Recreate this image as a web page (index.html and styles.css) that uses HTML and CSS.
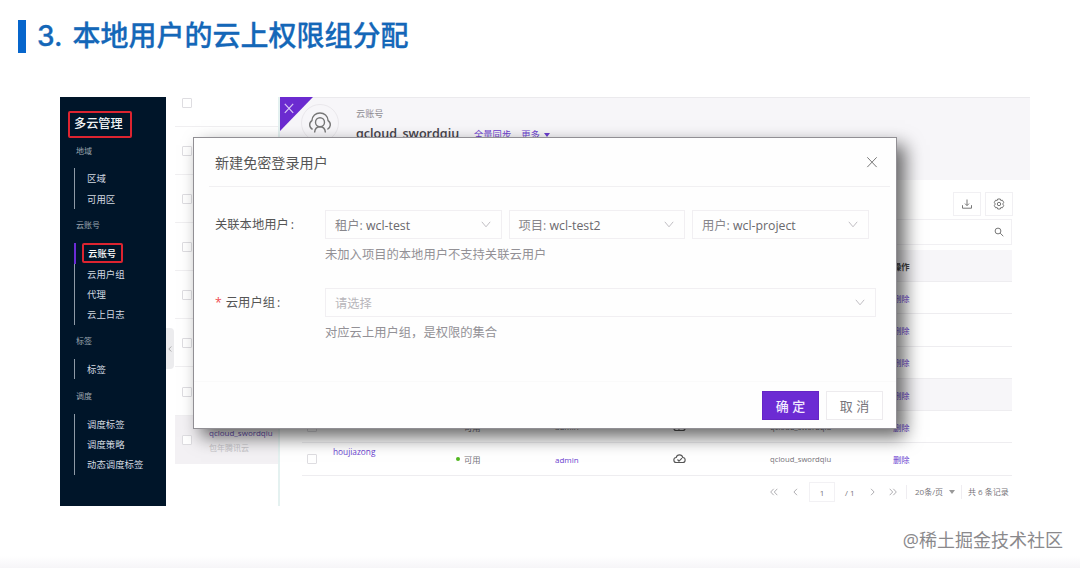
FILE: index.html
```html
<!DOCTYPE html>
<html lang="zh-CN">

<head>
    <meta charset="UTF-8">
    <title>本地用户的云上权限组分配</title>
    <link rel="stylesheet" href="styles.css">
</head>

<body>

    <h1 class="page-title">3. <span>本地用户的云上权限组分配</span></h1>

    <div class="console">
        <nav class="sidebar">
            <div class="sidebar-title">多云管理</div>
            <h4>地域</h4>
            <ul>
                <li>区域</li>
                <li>可用区</li>
            </ul>
            <h4>云账号</h4>
            <ul>
                <li class="active"><span>云账号</span></li>
                <li>云用户组</li>
                <li>代理</li>
                <li>云上日志</li>
            </ul>
            <h4>标签</h4>
            <ul>
                <li>标签</li>
            </ul>
            <h4>调度</h4>
            <ul>
                <li>调度标签</li>
                <li>调度策略</li>
                <li>动态调度标签</li>
            </ul>
        </nav>

        <!-- Account list -->
        <div class="accounts">
            <div class="account first"><i class="checkbox"></i></div>
            <div class="account"><i class="checkbox"></i></div>
            <div class="account"><i class="checkbox"></i></div>
            <div class="account"><i class="checkbox"></i></div>
            <div class="account"><i class="checkbox"></i></div>
            <div class="account"><i class="checkbox"></i></div>
            <div class="account"><i class="checkbox"></i></div>
            <div class="account selected">
                <i class="checkbox"></i>
                <div class="account-text">
                    <p class="account-name">qcloud_swordqiu</p>
                    <p class="account-brand">包年腾讯云</p>
                </div>
            </div>
            <div class="collapse">
                <svg width="4" height="6" viewBox="0 0 4 6"><path d="M3.3.5.8 3l2.5 2.5"/></svg>
            </div>
        </div>

        <!-- Account detail -->
        <div class="detail">
            <div class="detail-header">
                <svg class="corner" width="33" height="34" viewBox="0 0 33 34">
                    <path class="corner-bg" d="M0 0h33L0 34z"/>
                    <path class="corner-x" d="M4.8 6.8l8.4 9M13.2 6.8l-8.4 9"/>
                </svg>
                <div class="avatar">
                    <svg width="26" height="24" viewBox="0 0 26 24">
                        <path d="M5.600 18.300a5 5 0 0 1-.7-8.700C5.200 5 8.700 2 13 2s7.800 3 8.100 7.600a5 5 0 0 1-.7 8.700"/>
                        <circle cx="13" cy="11.300" r="4.500"/>
                        <path d="M7.600 21.500c.3-3.400 2.300-5.700 5.400-5.700s5.100 2.300 5.400 5.700"/>
                    </svg>
                </div>
                <div class="detail-info">
                    <p class="detail-type">云账号</p>
                    <div class="detail-line">
                        <h2>qcloud_swordqiu</h2>
                        <a>全量同步</a>
                        <a>更多 <i class="caret"></i></a>
                    </div>
                </div>
            </div>

            <div class="detail-body">
                <div class="toolbar">
                    <div class="tool">
                        <svg width="12" height="12" viewBox="0 0 12 12"><path d="M6 1.500v6M4 5.600l2 2 2-2M1.500 7.200v3h9v-3"/></svg>
                    </div>
                    <div class="tool">
                        <svg width="12" height="12" viewBox="0 0 12 12"><path d="M4.700 1h2.600l.5 1.500 1.600-.3 1.300 2.200L9.700 6l1 1.600-1.300 2.200-1.600-.3L7.300 11H4.700l-.5-1.500-1.600.3-1.300-2.200 1-1.600-1-1.600 1.300-2.200 1.600.3z"/><circle cx="6" cy="6" r="1.700"/></svg>
                    </div>
                </div>
                <div class="search">
                    <svg width="10" height="10" viewBox="0 0 10 10"><circle cx="4" cy="4" r="2.900"/><path d="M6.200 6.200l3.100 3"/></svg>
                </div>
                <div class="table">
                    <div class="tr th"><b class="ops">操作</b></div>
                    <div class="tr"><a class="ops">删除</a></div>
                    <div class="tr"><a class="ops">删除</a></div>
                    <div class="tr"><a class="ops">删除</a></div>
                    <div class="tr hover"><a class="ops">删除</a></div>
                    <div class="tr">
                        <i class="checkbox"></i>
                        <a class="name"></a>
                        <span class="status">可用</span>
                        <span class="owner">admin</span>
                        <svg class="cloud" width="13" height="10" viewBox="0 0 13 10"><path d="M3.500 8.500a2.500 2.500 0 0 1-.3-5 3.400 3.400 0 0 1 6.600 0 2.500 2.500 0 0 1-.3 5zM4.500 5.500l1.500 1.600 3-3"/></svg>
                        <span class="account-col">qcloud_swordqiu</span>
                        <a class="ops">删除</a>
                    </div>
                    <div class="tr">
                        <i class="checkbox"></i>
                        <a class="name">houjiazong</a>
                        <span class="status"><i class="dot"></i>可用</span>
                        <a class="owner">admin</a>
                        <svg class="cloud" width="13" height="10" viewBox="0 0 13 10"><path d="M3.500 8.500a2.500 2.500 0 0 1-.3-5 3.400 3.400 0 0 1 6.600 0 2.500 2.500 0 0 1-.3 5zM4.500 5.500l1.500 1.600 3-3"/></svg>
                        <span class="account-col">qcloud_swordqiu</span>
                        <a class="ops">删除</a>
                    </div>
                </div>
                <div class="pager">
                    <svg class="first-page" width="8" height="8" viewBox="0 0 8 8"><path d="M3.700.8.700 4l3 3.200M7.300.8l-3 3.200 3 3.200"/></svg>
                    <svg class="prev" width="5" height="8" viewBox="0 0 5 8"><path d="M4 .8.900 4 4 7.200"/></svg>
                    <span class="page">1</span>
                    <span class="total">/ 1</span>
                    <svg class="next" width="5" height="8" viewBox="0 0 5 8"><path d="M1 .8 4.100 4 1 7.200"/></svg>
                    <svg class="last-page" width="8" height="8" viewBox="0 0 8 8"><path d="M.7.800l3 3.200-3 3.200M4.300.8l3 3.200-3 3.200"/></svg>
                    <span class="size">20条/页 <i class="caret"></i></span>
                    <span class="count">共 6 条记录</span>
                </div>
            </div>
        </div>

        <div class="modal">
            <div class="modal-header">
                <h3>新建免密登录用户</h3>
                <svg width="12" height="12" viewBox="0 0 12 12"><path d="M1.300 1.300l9.400 9.800M10.700 1.300l-9.400 9.800"/></svg>
            </div>
            <div class="modal-body">
                <div class="form-row">
                    <label>关联本地用户<i class="colon">:</i></label>
                    <div class="field">
                        <div class="selects">
                            <div class="select"><span>租户: <em>wcl-test</em></span><svg width="10" height="7" viewBox="0 0 10 7"><path d="M.8.800 5 5.800 9.200.8"/></svg></div>
                            <div class="select"><span>项目: <em>wcl-test2</em></span><svg width="10" height="7" viewBox="0 0 10 7"><path d="M.8.800 5 5.800 9.200.8"/></svg></div>
                            <div class="select"><span>用户: <em>wcl-project</em></span><svg width="10" height="7" viewBox="0 0 10 7"><path d="M.8.800 5 5.800 9.200.8"/></svg></div>
                        </div>
                        <p class="hint">未加入项目的本地用户不支持关联云用户</p>
                    </div>
                </div>
                <div class="form-row">
                    <label><i class="required">*</i>云用户组<i class="colon">:</i></label>
                    <div class="field">
                        <div class="select wide"><span class="placeholder">请选择</span><svg width="10" height="7" viewBox="0 0 10 7"><path d="M.8.800 5 5.800 9.200.8"/></svg></div>
                        <p class="hint">对应云上用户组，是权限的集合</p>
                    </div>
                </div>
            </div>
            <div class="modal-footer">
                <button class="btn primary">确 定</button>
                <button class="btn">取 消</button>
            </div>
        </div>
    </div>

    <div class="watermark">@稀土掘金技术社区</div>

</body>

</html>
```
FILE: styles.css
```css
* {
    box-sizing: border-box;
}

body {
    margin: 0;
    height: 568px;
    overflow: hidden;
    font-family: "Open Sans", "Noto Sans CJK SC", sans-serif;
    background: linear-gradient(#fff 556px, #f6f5f8 568px);
    position: relative;
}

h1, h2, h3, h4, p, ul {
    margin: 0;
    padding: 0;
    font-weight: normal;
}

i, em {
    font-style: normal;
}

svg {
    display: block;
    flex: none;
    fill: none;
    stroke: #777;
}

.page-title {
    display: flex;
    gap: 10px;
    margin: 20px 0 44px 18px;
    padding-left: 11px;
    border-left: 8px solid #0766cc;
    height: 33px;
    line-height: 33px;
    font-family: Inter, "Noto Sans CJK SC", sans-serif;
    font-size: 28px;
    font-weight: 500;
    color: #1467b8;
    -webkit-text-stroke: 0.3px #1467b8;
    white-space: nowrap;
}

.console {
    position: relative;
    display: flex;
    margin-left: 60px;
    width: 970px;
    height: 409px;
}

/* Sidebar */
.sidebar {
    width: 106px;
    padding: 14px 0 0 8px;
    background: #001529;
    color: #d3dae1;
}

.sidebar-title {
    width: 64px;
    height: 27px;
    margin-bottom: 2.500px;
    padding-left: 4px;
    border: 2px solid #dc2430;
    border-radius: 2px;
    line-height: 22px;
    font-size: 12.200px;
    font-weight: 500;
    color: #f0f3f5;
}

.sidebar h4 {
    height: 20px;
    margin: 0 0 7.800px 8px;
    line-height: 20px;
    font-size: 8px;
    color: #9ba5af;
}

.sidebar ul {
    margin: 0 0 6.400px 6px;
    border-left: 1px solid #8e9aa6;
    list-style: none;
}

.sidebar li {
    height: 20.400px;
    padding-left: 12px;
    line-height: 21.600px;
    font-size: 9.400px;
}

.sidebar li.active {
    margin-left: -1px;
    padding-left: 6px;
    border-left: 2px solid #6b2bd6;
    color: #fff;
    font-weight: 500;
}

.active span {
    display: block;
    width: 41px;
    height: 20px;
    padding-left: 4px;
    border: 2px solid #dc2430;
    border-radius: 2px;
    line-height: 17px;
}

/* Account list */
.accounts {
    position: relative;
    width: 114px;
    padding-left: 9px;
    border-right: 2px solid #e4f1f0;
    overflow: hidden;
}

.account {
    display: flex;
    align-items: center;
    height: 48.200px;
    padding: 1px 0 0 7px;
    border-bottom: 1px solid #f0eff1;
}

.account.first {
    height: 29.500px;
    padding-bottom: 17px;
}

.account.selected {
    background: #f3f1f4;
    border: none;
}

.checkbox {
    flex: none;
    width: 10px;
    height: 10px;
    border: 1px solid #dedde1;
    border-radius: 1px;
    background: #fff;
}

.account-text {
    margin-left: 17px;
    font-size: 8px;
    line-height: 15px;
    white-space: nowrap;
}

.account-name {
    color: #6a51b5;
}

.account-brand {
    color: #c6c5c9;
}

.collapse {
    position: absolute;
    left: 0;
    top: 231px;
    display: flex;
    align-items: center;
    justify-content: center;
    width: 8px;
    height: 41px;
    border-radius: 0 4px 4px 0;
    background: #ececee;
}

.collapse svg {
    stroke: #aaa;
}

/* Detail */
.detail {
    flex: 1;
    font-size: 8px;
}

.detail a {
    color: #6b3fd0;
}

.detail-header {
    position: relative;
    display: flex;
    height: 83px;
    padding: 6px 0 0 21px;
    background: #f7f6f9;
    border-top: 1px solid #ebeaed;
}

.corner {
    position: absolute;
    left: 0;
    top: -1px;
    stroke: none;
}

.corner-bg {
    fill: #6b2bd0;
}

.corner-x {
    stroke: #d9c8f5;
    stroke-width: 1.200;
}

.avatar {
    display: flex;
    align-items: center;
    justify-content: center;
    width: 38px;
    height: 38px;
    border: 1px solid #eae8ec;
    border-radius: 50%;
}

.avatar svg {
    stroke-width: 1.400;
}

.detail-info {
    margin-left: 17px;
}

.detail-type {
    font-size: 9.200px;
    line-height: 19px;
    color: #8f8d93;
}

.detail-line {
    display: flex;
    align-items: center;
    height: 21px;
    font-size: 9.300px;
}

.detail-line h2 {
    width: 118px;
    font-size: 12.600px;
    font-weight: 600;
    color: #45434a;
}

.detail-line a {
    margin-right: 10px;
}

.caret {
    display: inline-block;
    margin-left: 2px;
    border: 3.500px solid transparent;
    border-top: 4.500px solid #6b3fd0;
    border-bottom: 0;
    vertical-align: 1px;
}

.detail-body {
    padding: 12px 18px 0 22px;
}

.toolbar {
    display: flex;
    justify-content: flex-end;
    gap: 4px;
    height: 27px;
    margin-right: -1px;
}

.tool {
    display: flex;
    align-items: center;
    justify-content: center;
    width: 28px;
    height: 24px;
    border: 1px solid #f1f0f3;
}

.search {
    display: flex;
    align-items: center;
    justify-content: flex-end;
    height: 26px;
    margin-bottom: 5px;
    padding-right: 7px;
    border: 1px solid #f1f0f3;
}

.tr {
    display: flex;
    align-items: center;
    height: 32.300px;
    padding-left: 5px;
    border-bottom: 1px solid #eeedf0;
    color: #77757b;
}

.tr.th {
    height: 32px;
    background: #f7f6f9;
    color: #444;
}

.tr.hover {
    background: #f7f6f9;
}

.ops {
    margin-left: auto;
    width: 119px;
    font-size: 8.300px;
}

.name {
    width: 137px;
    height: 27px;
    padding-left: 16px;
    font-size: 8.300px;
}

.status {
    display: flex;
    align-items: center;
    width: 100px;
    padding-left: 2px;
    font-size: 8.300px;
}

.status:not(:has(.dot)) {
    padding-left: 10px;
}

.dot {
    width: 4px;
    height: 4px;
    margin-right: 4px;
    border-radius: 50%;
    background: #52b81f;
}

.owner {
    width: 119px;
    padding-left: 1px;
}

.cloud {
    stroke: #555;
    stroke-width: 1.100;
}

.account-col {
    width: 61px;
    margin-left: 84px;
    font-size: 7.700px;
    white-space: nowrap;
}

.pager {
    display: flex;
    align-items: center;
    height: 32px;
    padding-right: 3px;
    justify-content: flex-end;
    color: #77757b;
    white-space: nowrap;
}

.pager svg {
    stroke: #b0afb3;
}

.prev {
    margin-left: 15px;
}

.page {
    width: 26px;
    height: 20px;
    margin-left: 11px;
    border: 1px solid #f2f1f4;
    line-height: 19px;
    text-align: center;
}

.total {
    width: 10px;
    margin: 1px 15px 0 10px;
}

.last-page {
    margin: 0 9px 0 14px;
}

.size {
    width: 56px;
    padding-left: 8px;
    border: solid #efedf1;
    border-width: 0 1px;
    line-height: 14px;
}

.size .caret {
    margin-left: 4px;
    border-width: 4px 3px 0;
    border-top-color: #999;
}

.count {
    width: 41px;
    margin-left: 6px;
}

/* Modal */
.modal {
    position: absolute;
    left: 133px;
    top: 40px;
    display: flex;
    flex-direction: column;
    width: 704px;
    height: 292px;
    border: 1px solid #918f94;
    background: #fefefe;
    box-shadow: 8px 8px 17px rgba(0, 0, 0, 0.6);
    font-size: 12.300px;
    color: #555;
}

.modal-header {
    display: flex;
    align-items: center;
    justify-content: space-between;
    height: 49px;
    margin: 0 6px 0 15px;
    padding: 0 12px 0 6px;
    border-bottom: 1px solid #f1f0f2;
}

.modal-header h3 {
    font-size: 14.100px;
    color: #555;
}

.modal-body {
    flex: 1;
    padding: 23px 0 0 20px;
}

.form-row {
    display: flex;
    height: 78px;
}

.form-row label {
    width: 111px;
    padding-left: 1px;
    line-height: 30px;
}

.colon {
    margin-left: 2px;
}

.required {
    margin-right: 4px;
    color: #f04b50;
}

.selects {
    display: flex;
    gap: 7px;
}

.select {
    display: flex;
    align-items: center;
    justify-content: space-between;
    width: 176.500px;
    height: 29px;
    padding: 0 10px 0 9px;
    border: 1px solid #f1eff2;
    color: #88868b;
}

.select em {
    color: #6a686d;
}

.select svg {
    stroke: #c0bec3;
}

.select.wide {
    width: 551px;
}

.select .placeholder {
    color: #b8b6bb;
}

.hint {
    margin-top: 7px;
    line-height: 18px;
    color: #939196;
}

.modal-footer {
    display: flex;
    justify-content: flex-end;
    gap: 7px;
    height: 47px;
    padding: 9px 13px 0 0;
    border-top: 1px solid #fafafa;
}

.btn {
    width: 57px;
    height: 29px;
    padding: 0;
    border: 1px solid #edebee;
    background: #fff;
    font-family: inherit;
    font-size: 13px;
    color: #77757b;
}

.btn.primary {
    border-color: #6525c5;
    background: #6c2bd3;
    color: #f3ecff;
    font-weight: 500;
}

.watermark {
    position: absolute;
    right: 17px;
    top: 527px;
    font-size: 18px;
    line-height: 27px;
    color: #8a898c;
}
```
